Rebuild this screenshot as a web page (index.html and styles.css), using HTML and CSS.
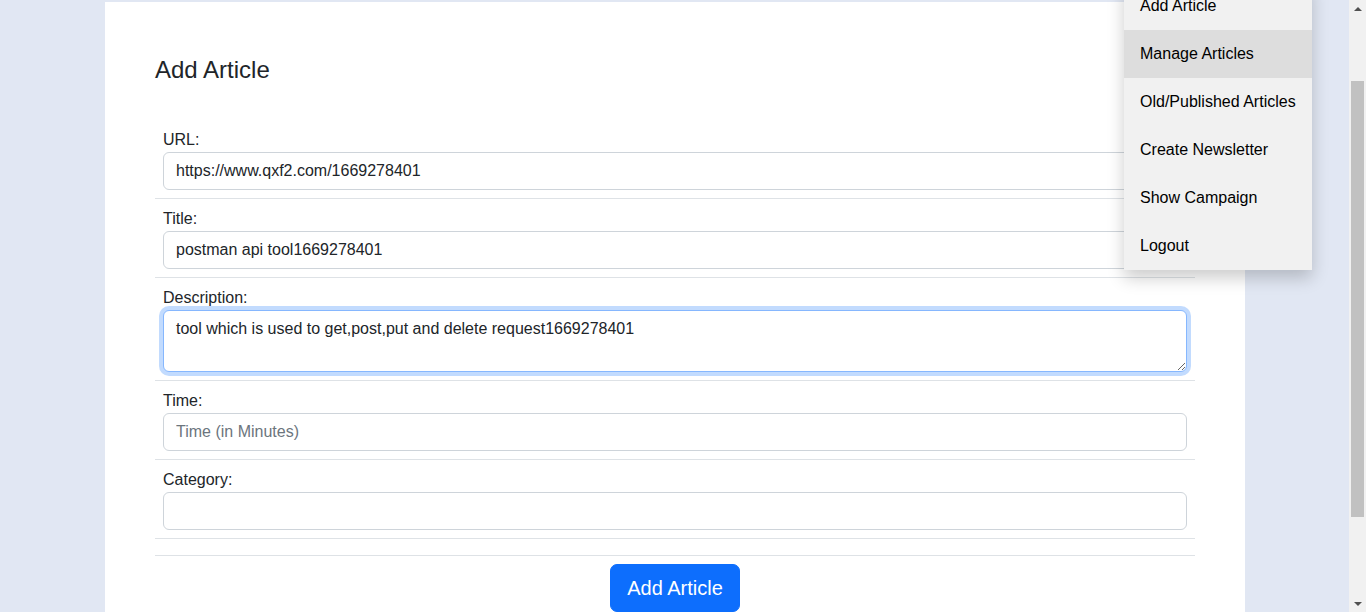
FILE: index.html
```html
<!DOCTYPE html>
<html lang="en">
<head>
<meta charset="utf-8">
<title>Add Article</title>
<link rel="stylesheet" href="styles.css">
</head>
<body>
<div class="page">
  <div class="card">
    <h4 class="card-title">Add Article</h4>
    <form class="form">
      <ul class="rows">
        <li class="row">
          <label class="lbl" for="url">URL:</label>
          <input class="ctl" id="url" type="text" value="https://www.qxf2.com/1669278401">
        </li>
        <li class="row">
          <label class="lbl" for="title">Title:</label>
          <input class="ctl" id="title" type="text" value="postman api tool1669278401">
        </li>
        <li class="row">
          <label class="lbl" for="desc">Description:</label>
          <textarea class="ctl ctl-area is-focused" id="desc" rows="2">tool which is used to get,post,put and delete request1669278401</textarea>
        </li>
        <li class="row">
          <label class="lbl" for="time">Time:</label>
          <input class="ctl" id="time" type="text" placeholder="Time (in Minutes)">
        </li>
        <li class="row">
          <label class="lbl" for="cat">Category:</label>
          <input class="ctl" id="cat" type="text">
        </li>
        <li class="row row-empty"></li>
        <li class="row row-submit">
          <button class="btn-primary" type="button">Add Article</button>
        </li>
      </ul>
    </form>
  </div>
  <div class="dropdown">
    <a class="dd-item" href="#">Add Article</a>
    <a class="dd-item dd-hover" href="#">Manage Articles</a>
    <a class="dd-item" href="#">Old/Published Articles</a>
    <a class="dd-item" href="#">Create Newsletter</a>
    <a class="dd-item" href="#">Show Campaign</a>
    <a class="dd-item" href="#">Logout</a>
  </div>
</div>
<div class="scrollbar">
  <div class="sb-btn"><span class="arrow-up"></span></div>
  <div class="sb-track"><div class="sb-thumb"></div></div>
  <div class="sb-btn"><span class="arrow-down"></span></div>
</div>
</body>
</html>
```

FILE: styles.css
```css
* { box-sizing: border-box; }

html, body {
  margin: 0;
  height: 612px;
  overflow: hidden;
}

body {
  display: flex;
  background: #e1e7f3;
  font-family: "Liberation Sans", Arial, sans-serif;
  font-size: 16px;
  line-height: 1.5;
  color: #212529;
}

.page {
  flex: 1;
  position: relative;
  overflow: hidden;
}

.card {
  margin: 2px 0 0 105px;
  width: 1140px;
  min-height: 700px;
  background: #fff;
  padding: 54px 50px 0;
}

.card-title {
  margin: 0 0 36px;
  font-size: 24px;
  font-weight: 400;
  line-height: 28px;
  color: #212529;
}

.form { margin: 0; }

.rows {
  list-style: none;
  margin: 0;
  padding: 0;
}

.row {
  display: flex;
  flex-direction: column;
  padding: 8px;
  border-bottom: 1px solid #dee2e6;
}

.row-empty { padding: 8px; }

.row-submit {
  border-bottom: none;
  align-items: center;
}

.lbl {
  display: block;
  font-size: 16px;
  line-height: 24px;
  color: #212529;
}

.ctl {
  display: block;
  width: 100%;
  height: 38px;
  padding: 6px 12px;
  font-family: "Liberation Sans", Arial, sans-serif;
  font-size: 16px;
  line-height: 24px;
  color: #212529;
  background: #fff;
  border: 1px solid #ced4da;
  border-radius: 6px;
  outline: none;
  margin: 0;
}

.ctl::placeholder { color: #6c757d; }

.ctl-area {
  height: 62px;
  resize: vertical;
}

.is-focused {
  border-color: #86b7fe;
  box-shadow: 0 0 0 4px rgba(13, 110, 253, 0.25);
}

.btn-primary {
  font-family: "Liberation Sans", Arial, sans-serif;
  font-size: 20px;
  line-height: 30px;
  padding: 8px 16px;
  color: #fff;
  background: #0d6efd;
  border: 1px solid #0d6efd;
  border-radius: 7px;
}

.dropdown {
  position: absolute;
  left: 1124px;
  top: -18px;
  width: 188px;
  background: #f1f1f1;
  box-shadow: 0 8px 16px 0 rgba(0, 0, 0, 0.2);
  display: flex;
  flex-direction: column;
}

.dd-item {
  display: block;
  padding: 12px 16px;
  line-height: 24px;
  color: #000;
  text-decoration: none;
  white-space: nowrap;
}

.dd-hover { background: #ddd; }

.scrollbar {
  width: 17px;
  flex: none;
  height: 612px;
  background: #f1f1f1;
  display: flex;
  flex-direction: column;
}

.sb-btn {
  height: 17px;
  display: flex;
  align-items: center;
  justify-content: center;
  flex: none;
}

.arrow-up {
  width: 0;
  height: 0;
  border-left: 4px solid transparent;
  border-right: 4px solid transparent;
  border-bottom: 4px solid #505050;
}

.arrow-down {
  width: 0;
  height: 0;
  border-left: 4px solid transparent;
  border-right: 4px solid transparent;
  border-top: 4px solid #505050;
}

.sb-track {
  flex: 1;
  padding: 64px 2px 0;
}

.sb-thumb {
  height: 436px;
  background: #c1c1c1;
}
```
